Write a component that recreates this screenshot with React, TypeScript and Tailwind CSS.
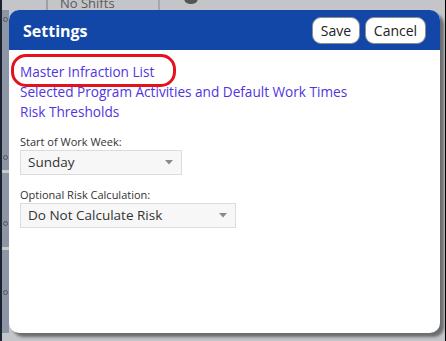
import React from "react";

function Caret() {
  return (
    <svg width="8" height="5" viewBox="0 0 8 5" className="shrink-0">
      <path d="M0 0 L8 0 L4 4.5 Z" fill="#8a8a8a" />
    </svg>
  );
}

function Select({ value, width }: { value: string; width: string }) {
  return (
    <div
      className={`${width} h-[25px] flex items-center justify-between border border-[#dcdcdc] bg-[#f7f7f7] pl-[7px] pr-[8px] text-[13.5px] text-[#333]`}
    >
      <span className="leading-none">{value}</span>
      <Caret />
    </div>
  );
}

export default function App() {
  return (
    <div className="relative w-[446px] h-[341px] overflow-hidden bg-[#c4c5c8] pl-[7px] pt-[10px] font-['Open_Sans','Noto_Sans',sans-serif] border-l-2 border-l-[#1d2230] border-r border-r-black">
      {/* dimmed background page */}
      <div className="absolute left-0 top-[10px] w-[7px] h-[323px] bg-[#8d96a7]" />
      <div className="absolute left-0 top-[170px] w-[7px] h-[3px] bg-[#c9cbc9]" />
      <div className="absolute left-0 top-[247px] w-[7px] h-[3px] bg-[#c9cbc9]" />
      <div className="absolute left-[1px] top-[17px] w-[5px] h-[5px] rounded-full border border-[#555]" />
      <div className="absolute left-[1px] top-[155px] w-[5px] h-[5px] rounded-full border border-[#555]" />
      <div className="absolute left-[1px] top-[221px] w-[5px] h-[5px] rounded-full border border-[#555]" />
      <div className="absolute left-[1px] top-[290px] w-[5px] h-[5px] rounded-full border border-[#555]" />
      <div className="absolute left-[44px] top-0 w-[2px] h-[10px] bg-[#9fa0a3]" />
      <div className="absolute left-[156px] top-0 w-[2px] h-[10px] bg-[#a7a8ab]" />
      <div className="absolute left-[58px] top-[-6px] text-[13px] text-[#5a5a5a] font-['Open_Sans',sans-serif]">
        No Shifts
      </div>
      <div className="absolute left-[182px] top-[-8px] w-[14px] h-[12px] rounded-full bg-[#555]" />

      {/* modal */}
      <div className="relative w-[431px] h-[323px] bg-white rounded-[10px] shadow-[4px_4px_3px_rgba(0,0,0,0.45)] flex flex-col overflow-hidden">
        <div className="h-[40px] bg-[#1247a8] flex items-center justify-between pl-[14px] pr-[14px] pt-[1px]">
          <h1 className="text-white font-bold text-[16px] leading-none">Settings</h1>
          <div className="flex gap-[5px]">
            <button className="w-[48px] h-[27px] bg-white border border-[#8e8e8e] rounded-[9px] text-[14px] text-[#222] leading-none">
              Save
            </button>
            <button className="w-[61px] h-[27px] bg-white border border-[#8e8e8e] rounded-[9px] text-[14px] text-[#222] leading-none">
              Cancel
            </button>
          </div>
        </div>

        <div className="flex flex-col pl-[11px] pt-[12px]">
          <div className="flex flex-col text-[13.6px] leading-[20px] text-[#4f35e0]">
            <a className="w-fit cursor-pointer">Master Infraction List</a>
            <a className="w-fit cursor-pointer">Selected Program Activities and Default Work Times</a>
            <a className="w-fit cursor-pointer">Risk Thresholds</a>
          </div>

          <div className="mt-[12px] text-[11px] leading-[16px] text-[#333]">Start of Work Week:</div>
          <Select value="Sunday" width="w-[162px]" />

          <div className="mt-[12px] text-[11px] leading-[16px] text-[#333]">Optional Risk Calculation:</div>
          <Select value="Do Not Calculate Risk" width="w-[216px]" />
        </div>

        {/* annotation ring */}
        <div className="absolute left-[2px] top-[44px] w-[165px] h-[33px] border-[3.5px] border-[#e5121d] rounded-[15px]" />
      </div>
    </div>
  );
}
